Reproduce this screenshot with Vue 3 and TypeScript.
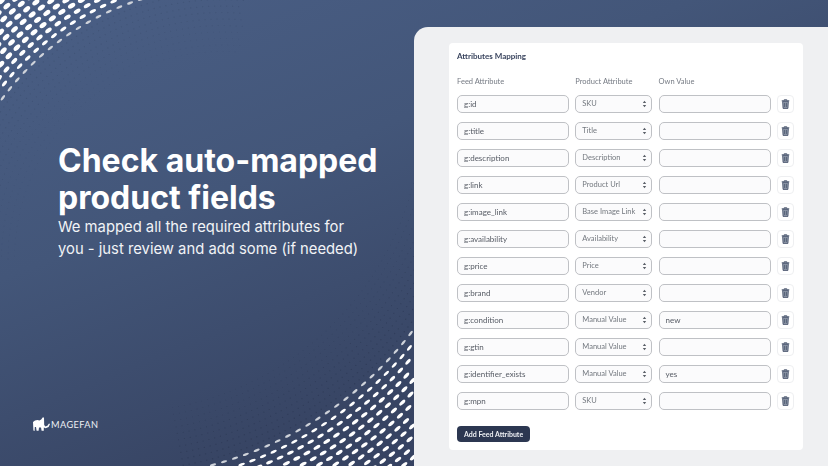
<template>
  <div class="page">
    <svg class="dots" width="414" height="466" viewBox="0 0 414 466">
      <circle v-for="(d, i) in halftone" :key="'h' + i" :cx="d.x" :cy="d.y" :r="d.r" :fill="d.fill" />
      <ellipse
        v-for="(d, i) in dots"
        :key="i"
        :cx="d.x"
        :cy="d.y"
        :rx="d.rx"
        :ry="d.ry"
        :fill="d.fill"
        :transform="`rotate(${d.angle} ${d.x} ${d.y})`"
      />
    </svg>

    <section class="intro">
      <h1>Check auto-mapped<br />product fields</h1>
      <p>We mapped all the required attributes for<br />you - just review and add some (if needed)</p>
      <div class="logo">
        <svg width="17" height="14" viewBox="0 0 17 14">
          <path
            d="M0 5 L2 3.4 L4.5 3 L6.4 3.6 L8.2 2.6 L9.6 0.6 L11 0.6 L11.2 8 L12.4 9.4 L14.4 8.8 L16 6.4 L17 7 L15.6 10 L12.6 11.2 L10.8 10.6 L10.8 13.8 L8.6 13.8 L8 10.6 L6 10.4 L5.6 13.8 L3.6 13.8 L3 10 L1.8 10 L1.6 14 L0.4 13.6 Z"
            fill="#fff"
          />
        </svg>
        <span>MAGEFAN</span>
      </div>
    </section>

    <section class="panel">
      <div class="card">
        <h2>Attributes Mapping</h2>
        <div class="grid head">
          <span>Feed Attribute</span>
          <span>Product Attribute</span>
          <span>Own Value</span>
        </div>
        <div v-for="row in rows" :key="row.feed" class="grid row">
          <div class="field feed">{{ row.feed }}</div>
          <div class="field select">
            <span>{{ row.product }}</span>
            <svg width="5" height="8" viewBox="0 0 5 8">
              <path d="M2.5 0.8 L4.2 3 H0.8 Z M2.5 7.2 L0.8 5 H4.2 Z" fill="#5a5f67" />
            </svg>
          </div>
          <div class="field own">{{ row.own }}</div>
          <div class="trash">
            <svg width="9" height="10" viewBox="0 0 10 11">
              <path d="M3.6 1.6 V0.7 H6.4 V1.6" fill="none" stroke="#3f4c65" stroke-width="0.9" />
              <path d="M0.8 2 H9.2" stroke="#3f4c65" stroke-width="1.1" />
              <path d="M1.8 2.6 H8.2 L7.7 10.4 H2.3 Z" fill="#8e97a7" stroke="#3f4c65" stroke-width="0.9" />
              <path d="M4 4.2 V8.8 M6 4.2 V8.8" stroke="#3f4c65" stroke-width="0.8" />
            </svg>
          </div>
        </div>
        <button class="add" type="button">Add Feed Attribute</button>
      </div>
    </section>
  </div>
</template>

<script setup lang="ts">
interface Row {
  feed: string;
  product: string;
  own: string;
}

interface Dot {
  x: number;
  y: number;
  rx: number;
  ry: number;
  angle: number;
  fill: string;
}

interface Speck {
  x: number;
  y: number;
  r: number;
  fill: string;
}

const rows: Row[] = [
  { feed: "g:id", product: "SKU", own: "" },
  { feed: "g:title", product: "Title", own: "" },
  { feed: "g:description", product: "Description", own: "" },
  { feed: "g:link", product: "Product Url", own: "" },
  { feed: "g:image_link", product: "Base Image Link", own: "" },
  { feed: "g:availability", product: "Availability", own: "" },
  { feed: "g:price", product: "Price", own: "" },
  { feed: "g:brand", product: "Vendor", own: "" },
  { feed: "g:condition", product: "Manual Value", own: "new" },
  { feed: "g:gtin", product: "Manual Value", own: "" },
  { feed: "g:identifier_exists", product: "Manual Value", own: "yes" },
  { feed: "g:mpn", product: "SKU", own: "" },
];

// both dot bands sit outside a big circle, so polar rows follow the curve
const bands = [
  { cx: 222, cy: 259, radius: 270, from: 180, to: 275, rows: 14, maxRx: 4, maxRy: 2.3, spacing: 11.5, step: 7.5, speck: 0.14 },
  { cx: 119, cy: 109, radius: 366, from: 0, to: 80, rows: 16, maxRx: 3.8, maxRy: 1.7, spacing: 11.5, step: 8, speck: 0.3 },
];

function inPanel(x: number, y: number) {
  return x > -6 && x < 414 && y > -6 && y < 472;
}

const dots: Dot[] = [];
const halftone: Speck[] = [];

for (const b of bands) {
  for (let r = 0; r < b.rows; r++) {
    const dist = b.radius + 2 + r * b.step;
    const gap = (b.spacing / dist) * (180 / Math.PI);
    const t = Math.min(r / 3, 1);
    for (let a = b.from + (r % 2) * gap * 0.5; a < b.to; a += gap) {
      const rad = (a * Math.PI) / 180;
      const x = b.cx + dist * Math.cos(rad);
      const y = b.cy + dist * Math.sin(rad);
      if (!inPanel(x, y)) continue;
      dots.push({
        x,
        y,
        rx: 3.2 + (b.maxRx - 3.2) * t,
        ry: 1.2 + (b.maxRy - 1.2) * t,
        angle: a + 90,
        fill: r === 0 ? "#cfd3da" : "#ffffff",
      });
    }
  }
  // faint halftone just inside the curve
  for (let r = 0; r < 10; r++) {
    const dist = b.radius - 4 - r * 6.5;
    const gap = (6 / dist) * (180 / Math.PI);
    for (let a = b.from + (r % 2) * gap * 0.5; a < b.to; a += gap) {
      const rad = (a * Math.PI) / 180;
      const x = b.cx + dist * Math.cos(rad);
      const y = b.cy + dist * Math.sin(rad);
      if (!inPanel(x, y)) continue;
      halftone.push({ x, y, r: 0.7 - r * 0.04, fill: `rgba(30, 40, 62, ${b.speck})` });
    }
  }
}
</script>

<style scoped>
.page {
  position: relative;
  display: flex;
  width: 828px;
  height: 466px;
  overflow: hidden;
  background: linear-gradient(158deg, #4a5f86 0%, #435679 35%, #374463 70%, #343f5e 100%);
}

.dots {
  position: absolute;
  top: 0;
  left: 0;
}

.intro {
  position: relative;
  display: flex;
  flex-direction: column;
  width: 414px;
  flex-shrink: 0;
  padding: 142px 0 0 58px;
  box-sizing: border-box;
  color: #fff;
  font-family: Inter, "Liberation Sans", sans-serif;
}

h1 {
  margin: 0;
  font-size: 32px;
  font-weight: 700;
  line-height: 37px;
}

.intro p {
  margin: 0;
  font-size: 14.8px;
  font-weight: 400;
  line-height: 22px;
  color: #f1f3f6;
}

.logo {
  display: flex;
  align-items: center;
  gap: 1px;
  margin: 157px 0 0 -25px;
  font-family: Lato, sans-serif;
  font-size: 9.2px;
  letter-spacing: 0.4px;
  color: #eef0f4;
}

.panel {
  flex: 1;
  margin-top: 27px;
  padding: 16px 25px 16px 35px;
  border-top-left-radius: 14px;
  background: #eff0f2;
}

.card {
  height: 407px;
  padding: 8px 8px 0;
  box-sizing: border-box;
  border-radius: 4px;
  background: #fff;
  font-family: Lato, "Open Sans", sans-serif;
  filter: blur(0.3px);
}

h2 {
  margin: 0 0 14px;
  font-size: 8px;
  font-weight: 700;
  line-height: 11px;
  color: #39445e;
}

.grid {
  display: grid;
  grid-template-columns: 112px 77px 112px 17px;
  column-gap: 6.3px;
  align-items: center;
}

.head {
  height: 11px;
  margin-bottom: 8px;
  font-size: 7.5px;
  color: #767b84;
}

.row {
  height: 18px;
  margin-bottom: 9px;
}

.field {
  height: 18px;
  box-sizing: border-box;
  padding: 0 6px;
  border: 1px solid #bfc1c5;
  border-radius: 5px;
  background: #fbfbfc;
  font-size: 8px;
  line-height: 16px;
  color: #565b64;
  white-space: nowrap;
}

.select {
  display: flex;
  align-items: center;
  justify-content: space-between;
  padding: 0 4px 0 6px;
  font-size: 7.5px;
  color: #73787f;
}

.trash {
  display: flex;
  align-items: center;
  justify-content: center;
  height: 18px;
  border: 1px solid #eeeff1;
  border-radius: 4px;
  box-sizing: border-box;
}

.add {
  display: block;
  height: 16px;
  margin-top: 16px;
  padding: 0 7px;
  border: 0;
  border-radius: 4px;
  background: #2c3751;
  font-family: inherit;
  font-size: 7px;
  font-weight: 700;
  color: #eef0f4;
}
</style>
